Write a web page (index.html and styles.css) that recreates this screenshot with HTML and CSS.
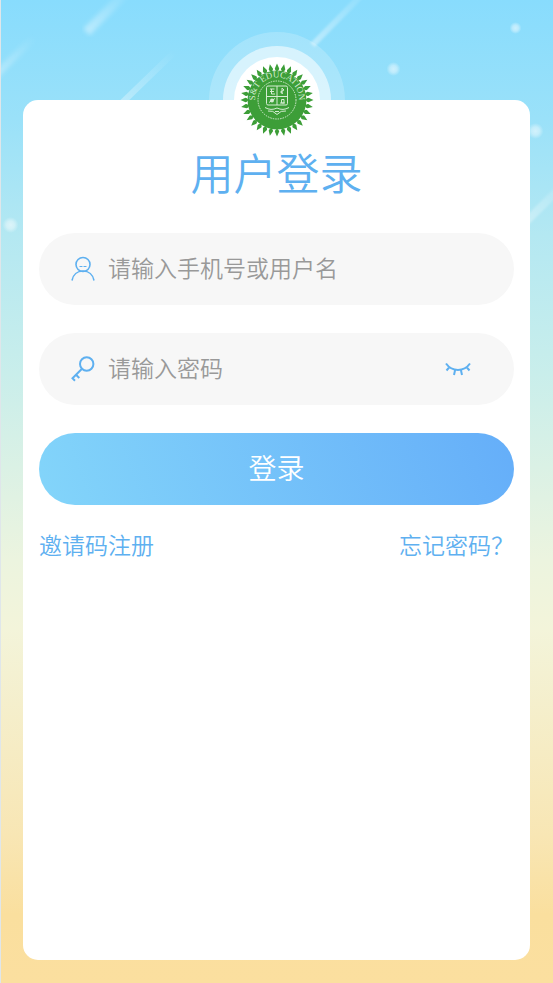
FILE: index.html
```html
<!DOCTYPE html>
<html lang="zh-CN">
<head>
  <meta charset="UTF-8" />
  <meta name="viewport" content="width=device-width, initial-scale=1" />
  <title>用户登录</title>
  <link rel="stylesheet" href="styles.css">
</head>
<body>
  <div class="login-page">
    <!-- Sky background -->
    <svg class="sky" viewBox="0 0 553 300" preserveAspectRatio="xMidYMin slice" aria-hidden="true">
      <defs>
        <linearGradient id="trail" x1="0" y1="1" x2="1" y2="0">
          <stop offset="0" stop-color="#fff" stop-opacity="0.4" />
          <stop offset="1" stop-color="#fff" stop-opacity="0" />
        </linearGradient>
        <radialGradient id="glow">
          <stop offset="0" stop-color="#fff" stop-opacity="0.55" />
          <stop offset="0.5" stop-color="#fff" stop-opacity="0.4" />
          <stop offset="1" stop-color="#fff" stop-opacity="0" />
        </radialGradient>
        <filter id="soft"><feGaussianBlur stdDeviation="2" /></filter>
        <filter id="softer"><feGaussianBlur stdDeviation="1" /></filter>
      </defs>
      <g fill="none" stroke="url(#trail)">
        <path d="M86 32 130 -12" stroke-width="9" filter="url(#soft)" />
        <path d="M-12 82 34 37" stroke-width="7" filter="url(#soft)" />
        <path d="M112 112 174 52" stroke-width="6" />
        <path d="M312 45 374 -18" stroke-width="6" filter="url(#softer)" />
        <path d="M515 232 575 173" stroke-width="8" filter="url(#softer)" />
      </g>
      <g fill="url(#glow)">
        <circle cx="393" cy="69" r="7" />
        <circle cx="515" cy="28" r="6" />
        <circle cx="535" cy="131" r="8" />
        <circle cx="10" cy="225" r="8" />
      </g>
    </svg>

    <main class="login-card">
      <div class="logo">
        <svg viewBox="0 0 76 76" role="img" aria-label="S&amp;T Education">
          <defs>
            <path id="ring-text" d="M16.500 42A22 22 0 1 1 59.500 42" />
            <path id="ray" d="M38 1.500 35.800 6.500Q36 8.300 37.300 8.600V11H38.700V8.600Q40 8.300 40.200 6.500Z" />
            <g id="rays">
              <use href="#ray" />
              <use href="#ray" transform="rotate(11.25 38 38)" />
              <use href="#ray" transform="rotate(22.5 38 38)" />
              <use href="#ray" transform="rotate(33.75 38 38)" />
              <use href="#ray" transform="rotate(45 38 38)" />
              <use href="#ray" transform="rotate(56.25 38 38)" />
              <use href="#ray" transform="rotate(67.5 38 38)" />
              <use href="#ray" transform="rotate(78.75 38 38)" />
            </g>
          </defs>
          <g class="logo-green">
            <use href="#rays" />
            <use href="#rays" transform="rotate(90 38 38)" />
            <use href="#rays" transform="rotate(180 38 38)" />
            <use href="#rays" transform="rotate(270 38 38)" />
            <circle cx="38" cy="38" r="29.500" />
          </g>
          <circle class="logo-line" cx="38" cy="38" r="19" stroke-dasharray="1.5 1" />
          <text class="logo-text"><textPath href="#ring-text" startOffset="50%" text-anchor="middle">S&amp;T EDUCATION</textPath></text>
          <path class="logo-line" d="M29 24H47Q48.500 24 48.500 25.500V41.500Q48.500 43 47 43H29Q27.500 43 27.500 41.500V25.500Q27.500 24 29 24ZM38 24V43M27.500 34.500H48.500" />
          <path class="logo-line" d="M31 27H35.500M31 29.500H35M32.500 27V32H36M43 26V32M43 26 45 28 41.500 30 44 31.500M30 40.500 36 36.500M41 41H46M42.500 37.500H45V41H42.500Z" />
          <circle class="logo-white" cx="33" cy="38.500" r="2" />
          <path class="logo-line" d="M26 45.500Q32 49 38 46Q44 49 50 45.500M29 49Q34 48 38 52.500Q42 48 47 49M36 49.500H40" />
        </svg>
      </div>

      <h1 class="title">用户登录</h1>

      <form class="login-form">
        <div class="field">
          <label for="username" aria-label="手机号或用户名">
            <svg class="field-icon" viewBox="0 0 26 26" aria-hidden="true">
              <circle cx="13" cy="8.500" r="7" />
              <path d="M2 24.500C3 18.500 7.500 15 13 15S23 18.500 24 24.500" />
              <path class="face" d="M9.500 10.500H12.500M13.500 10.500H16.500" />
            </svg>
          </label>
          <input type="text" id="username" placeholder="请输入手机号或用户名">
        </div>

        <div class="field">
          <label for="password" aria-label="密码">
            <svg class="field-icon key-icon" viewBox="0 0 26 26" aria-hidden="true">
              <circle cx="16.700" cy="8" r="6.700" />
              <path d="M12 12.700 2.500 22.200 5 24.700M6 18.700 9.300 22" />
            </svg>
          </label>
          <input type="password" id="password" placeholder="请输入密码">
          <button type="button" class="eye-btn" aria-label="显示密码">
            <svg viewBox="0 0 26 14" aria-hidden="true">
              <path d="M1 1.500C7 10 19 10 25 1.500M4.500 5 1.500 8.500M10 8.500 9 13M16 8.500 17 13M21.500 5 24.500 8.500" />
            </svg>
          </button>
        </div>

        <button type="submit" class="login-btn">登录</button>
      </form>

      <div class="links">
        <a href="#">邀请码注册</a>
        <a href="#">忘记密码？</a>
      </div>
    </main>
  </div>
</body>
</html>
```
FILE: styles.css
```css
:root {
  --primary-color: #5eb0f0;
  --field-bg: #f7f7f7;
  --placeholder: #999;
  --white: #fff;
}

* {
  margin: 0;
  padding: 0;
  box-sizing: border-box;
}

body {
  font-family: "Liberation Sans", "Noto Sans CJK SC", sans-serif;
  font-weight: 350;
  color: var(--primary-color);
}

button,
input {
  font-family: inherit;
  font-weight: inherit;
  border: none;
  outline: none;
  background: none;
}

.login-page {
  position: relative;
  display: flex;
  min-height: 100vh;
  padding: 100px 23px 23px 22px;
  border-left: 1px solid #dfe6ea;
  background: linear-gradient(#88dcfd 0%, #9ae1f9 12%, #b4e8f2 24%, #c9eeeb 38%, #ecf4df 57%, #f3f4da 64%, #f8e6b4 85%, #fadf9e 93%, #fbdf9f 100%);
}

.sky {
  position: absolute;
  top: 0;
  left: 0;
  width: 100%;
  height: 300px;
}

/* ---------------- Card ---------------- */
.login-card {
  position: relative;
  flex: 1;
  padding: 44px 16px 0;
  border-radius: 15px;
  background-color: var(--white);
}

.logo {
  position: absolute;
  top: -43px;
  left: 50%;
  width: 86px;
  height: 86px;
  padding: 5px;
  transform: translateX(-50%);
  border-radius: 50%;
  background-color: var(--white);
}

/* Halo rings, hidden where they run behind the card */
.logo::before,
.logo::after {
  content: "";
  position: absolute;
  left: 50%;
  bottom: 50%;
  z-index: -1;
  transform: translateX(-50%);
  background-color: rgba(255, 255, 255, 0.2);
}

.logo::before {
  width: 136px;
  height: 68px;
  border-radius: 68px 68px 0 0;
}

.logo::after {
  width: 108px;
  height: 54px;
  border-radius: 54px 54px 0 0;
  background-color: rgba(255, 255, 255, 0.55);
}

.logo svg {
  display: block;
  width: 76px;
  height: 76px;
}

.logo-green {
  fill: #3d9e38;
}

.logo-white {
  fill: #d5ecd2;
}

.logo-line {
  fill: none;
  stroke: #d5ecd2;
  stroke-width: 1;
}

.logo-text {
  font-family: "Liberation Serif", serif;
  font-size: 9px;
  fill: #d5ecd2;
}

.title {
  font-size: 43px;
  font-weight: inherit;
  line-height: 62px;
  text-align: center;
}

/* ---------------- Form ---------------- */
.login-form {
  display: flex;
  flex-direction: column;
  gap: 28px;
  margin-top: 27px;
}

.field {
  display: flex;
  align-items: center;
  height: 72px;
  padding: 0 43px 0 31px;
  border-radius: 36px;
  background-color: var(--field-bg);
}

.field label {
  display: flex;
}

.field-icon {
  width: 26px;
  height: 26px;
  fill: none;
  stroke: var(--primary-color);
  stroke-width: 1.6;
}

.field-icon .face {
  stroke-width: 1;
}

.key-icon {
  stroke-width: 2;
}

.field input {
  flex: 1;
  min-width: 0;
  height: 100%;
  margin-left: 12px;
  color: #333;
  font-size: 23px;
}

.field input::placeholder {
  color: var(--placeholder);
}

.eye-btn {
  display: flex;
  cursor: pointer;
}

.eye-btn svg {
  width: 26px;
  height: 14px;
  fill: none;
  stroke: var(--primary-color);
  stroke-width: 2;
}

.login-btn {
  height: 72px;
  padding-bottom: 4px;
  border-radius: 36px;
  background: linear-gradient(70deg, #83d5fa, #65aef9);
  color: var(--white);
  font-size: 28px;
  cursor: pointer;
}

.links {
  display: flex;
  justify-content: space-between;
  margin-top: 23px;
  font-size: 23px;
  line-height: 36px;
}

.links a {
  color: inherit;
  text-decoration: none;
}
```
